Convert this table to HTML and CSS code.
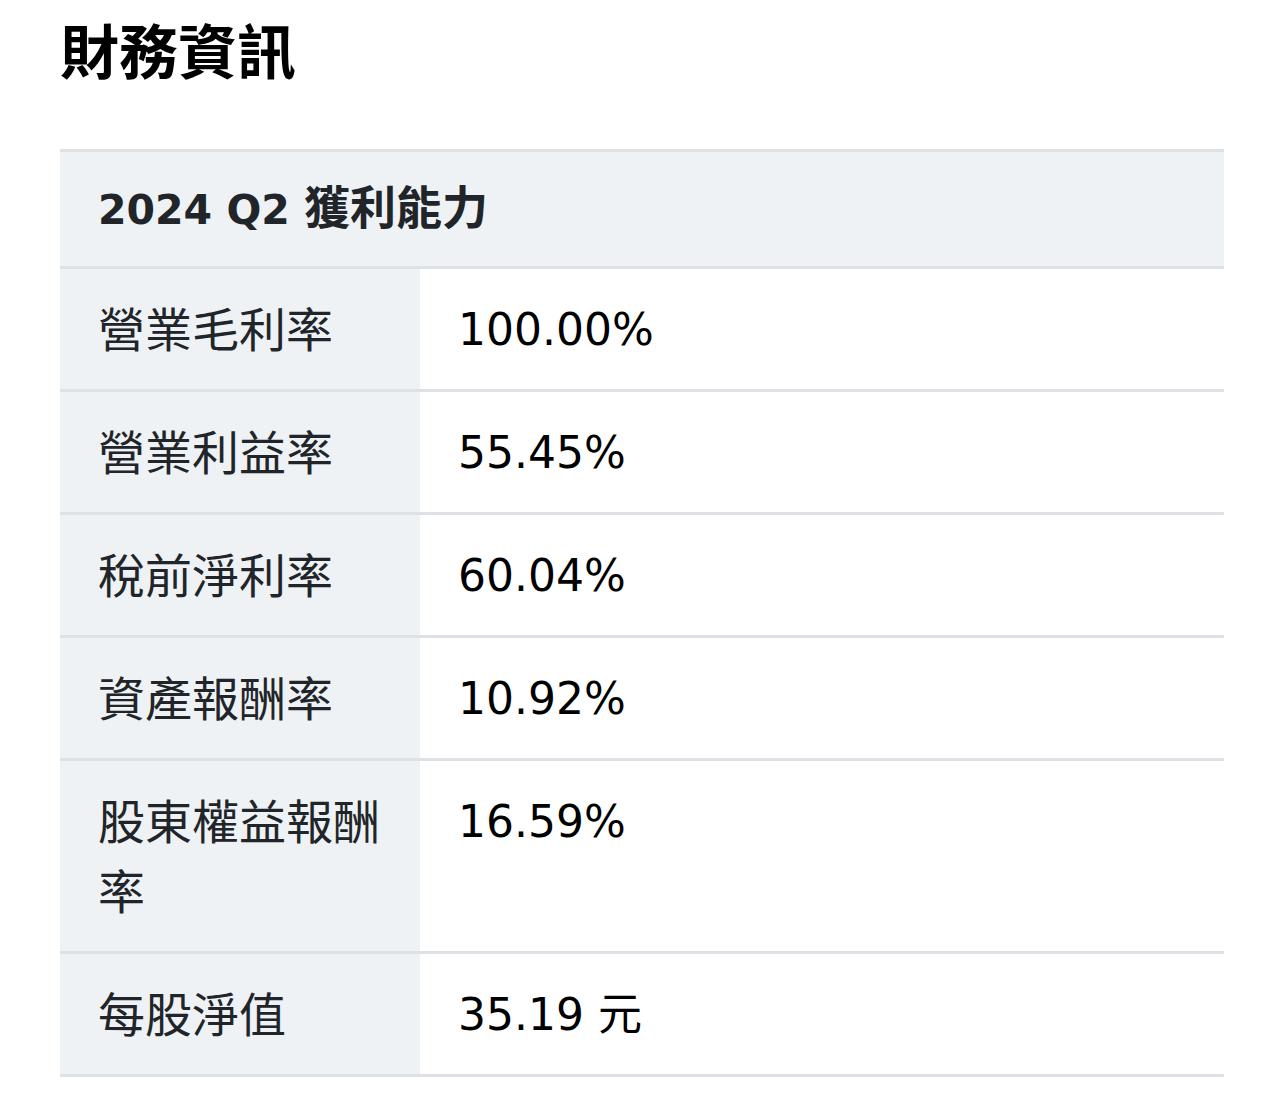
FILE: index.html
```html
<!DOCTYPE html>
<html lang="zh-Hant">
<head>
<meta charset="utf-8">
<title>財務資訊</title>
<link rel="stylesheet" href="styles.css">
</head>
<body>
<main class="page">
  <h1 class="title">財務資訊</h1>
  <table class="fin">
    <thead>
      <tr><th colspan="2" class="head"><span class="latin">2024 Q2 </span>獲利能力</th></tr>
    </thead>
    <tbody>
      <tr><th class="label">營業毛利率</th><td class="value">100.00%</td></tr>
      <tr><th class="label">營業利益率</th><td class="value">55.45%</td></tr>
      <tr><th class="label">稅前淨利率</th><td class="value">60.04%</td></tr>
      <tr><th class="label">資產報酬率</th><td class="value">10.92%</td></tr>
      <tr><th class="label">股東權益報酬率</th><td class="value">16.59%</td></tr>
      <tr><th class="label">每股淨值</th><td class="value">35.19 元</td></tr>
    </tbody>
  </table>
</main>
</body>
</html>
```
FILE: styles.css
```css
html, body {
  margin: 0;
  padding: 0;
  background: #ffffff;
}
body {
  font-family: "DejaVu Sans", "Noto Sans CJK TC", sans-serif;
  color: #000;
}
.page {
  padding: 9px 60px 30px;
}
.title {
  margin: 0;
  font-size: 59px;
  font-weight: 700;
  line-height: 80px;
  color: #000;
  font-family: "Noto Sans CJK TC", sans-serif;
}
.fin {
  margin-top: 60px;
  width: 100%;
  border-collapse: collapse;
  line-height: 70px;
}
.fin th, .fin td {
  border-top: 3px solid #dee2e6;
  border-bottom: 3px solid #dee2e6;
  text-align: left;
  vertical-align: top;
}
.head {
  background: #eef2f5;
  color: #212529;
  font-weight: 700;
  font-size: 46px;
  padding: 21px 38px 21px;
  font-family: "DejaVu Sans", "Noto Sans CJK TC", sans-serif;
}
.latin {
  font-size: 41px;
}
.label {
  width: 284px;
  background: #eef2f5;
  color: #212529;
  font-weight: 400;
  font-size: 47px;
  font-family: "Noto Sans CJK TC", sans-serif;
  padding: 23px 38px 27px;
}
.value {
  color: #000;
  font-size: 44px;
  padding: 26px 38px 24px;
}
```
